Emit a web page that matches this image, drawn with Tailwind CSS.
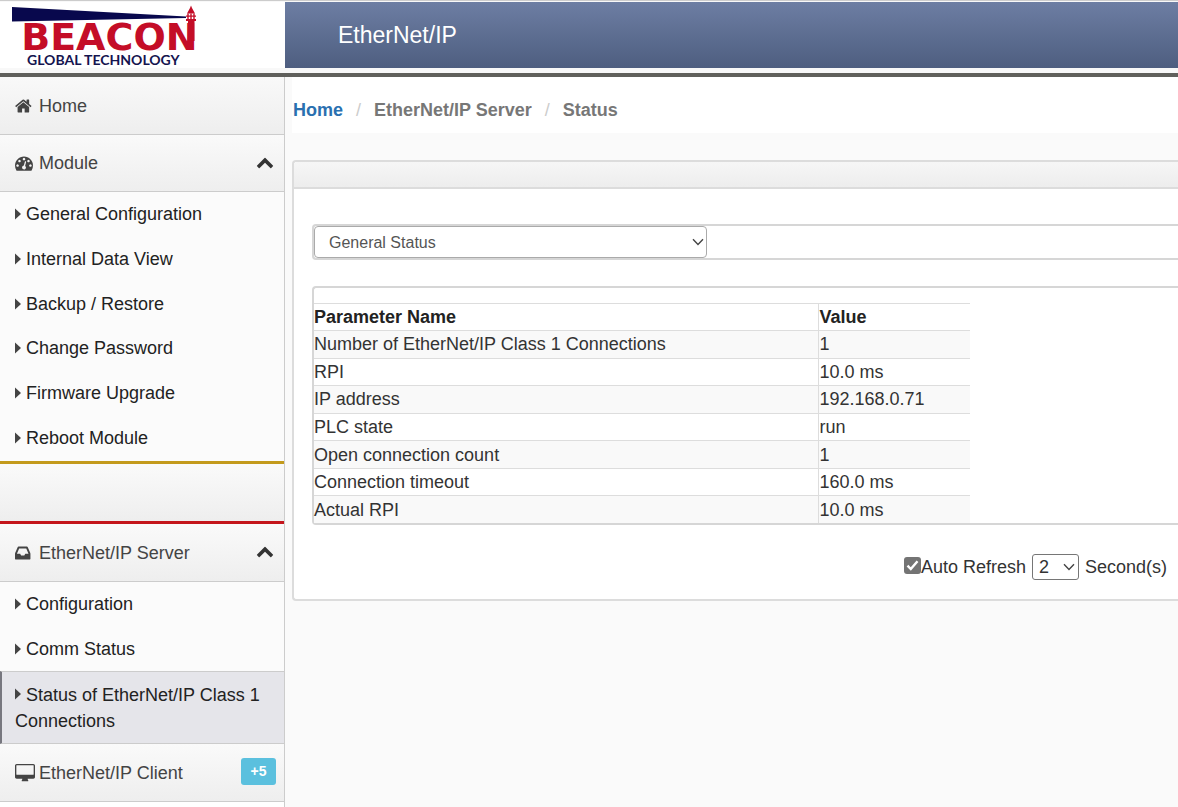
<!DOCTYPE html>
<html lang="en">
<head>
<meta charset="utf-8">
<title>EtherNet/IP Server Status</title>
<script src="https://cdn.jsdelivr.net/npm/@tailwindcss/browser@4"></script>
</head>
<body class="flex min-h-screen flex-col overflow-x-hidden bg-[#fafafa] font-['Liberation_Sans',Arial,sans-serif] text-lg text-[#333]">
<svg class="hidden" aria-hidden="true">
  <symbol id="chevron" viewBox="0 0 1792 1792"><path d="M1683 1331l-166 165q-19 19-45 19t-45-19l-531-531-531 531q-19 19-45 19t-45-19l-166-165q-19-19-19-45.500t19-45.500l742-741q19-19 45-19t45 19l742 741q19 19 19 45.500t-19 45.500z"/></symbol>
  <symbol id="caret" viewBox="0 0 6 12"><path d="M0 0.5 6 6 0 11.5z"/></symbol>
  <symbol id="down" viewBox="0 0 12 8"><path d="M1 1.2 6 6.4 11 1.2" fill="none" stroke="#444" stroke-width="1.4"/></symbol>
</svg>

<header class="flex h-[77px] shrink-0 border-t border-b-4 border-t-[#ccc] border-b-[#60605c] bg-[#f8f8f8] pt-px pb-[5px]">
  <div class="w-[285px] shrink-0 bg-white">
    <svg class="h-[66px] w-[200px]" viewBox="0 2 200 66" role="img" aria-label="Beacon Global Technology">
      <path d="M12 7 186 16.500V18L12 21.500z" fill="#08084d"/>
      <g fill="#c40d27">
        <path d="M191 5.500 192 8 195 13.500H187L190 8z"/>
        <path d="M187.300 13.500h1.400v6h-1.400zM193.300 13.500h1.400v6h-1.400zM190.300 13.500h1.400v6h-1.400zM186 19h10v2h-10zM186 15.500h10v1.200h-10z"/>
        <path d="M188 21h6.500v20h-7z"/>
        <text x="194.500" y="50" text-anchor="end" dx="3" font-family="DejaVu Sans" font-weight="bold" font-size="38">BEACON</text>
      </g>
      <text x="27" y="65" font-family="Lato, sans-serif" font-weight="bold" font-size="14" fill="#14144f">GLOBAL TECHNOLOGY</text>
    </svg>
  </div>
  <div class="flex flex-1 items-center bg-linear-to-b from-[#6d7ea3] to-[#4e5e80] pt-[2px] pl-[53px]">
    <h1 class="text-[23px] text-white">EtherNet/IP</h1>
  </div>
</header>

<div class="flex flex-1">
  <nav class="w-[285px] shrink-0 border-r border-[#ccc] bg-[#fbfbfb] text-[#222]">
    <a href="#" class="flex h-[58px] items-center border-b border-[#ccc] bg-linear-to-b from-[#f9f9f9] to-[#eee] pl-[15px] text-[#444]">
      <span class="w-6"><svg class="size-[18px]" fill="#444" viewBox="64 0 1792 1792"><path d="M1472 992v480q0 26-19 45t-45 19h-384v-384h-256v384h-384q-26 0-45-19t-19-45v-480q0-1 .5-3t.5-3l575-474 575 474q1 2 1 6zm223-69l-62 74q-8 9-21 11h-3q-13 0-21-7l-692-577-692 577q-12 8-24 7-13-2-21-11l-62-74q-8-10-7-23.500t11-21.500l719-599q32-26 76-26t76 26l244 204v-195q0-14 9-23t23-9h192q14 0 23 9t9 23v408l219 182q10 8 11 21.500t-7 23.500z"/></svg></span>Home
    </a>
    <button type="button" class="flex h-[57px] w-full items-center border-b border-[#ccc] bg-linear-to-b from-[#fafafa] to-[#eee] pr-[10px] pl-[15px] text-[#444]">
      <span class="w-6"><svg class="size-[18px]" fill="#444" viewBox="0 0 1792 1792"><path d="M384 1152q0-53-37.500-90.500t-90.500-37.500-90.500 37.500-37.500 90.500 37.500 90.500 90.500 37.500 90.500-37.500 37.500-90.500zm192-448q0-53-37.500-90.500t-90.500-37.500-90.500 37.500-37.500 90.500 37.500 90.500 90.500 37.500 90.500-37.500 37.500-90.500zm428 481l101-382q6-26-7.500-48.500t-38.500-29.500-48 6.500-30 39.500l-101 382q-60 5-107 43.500t-63 98.500q-20 77 20 146t117 89 146-20 89-117q16-60-6-117t-72-91zm660-33q0-53-37.500-90.500t-90.500-37.500-90.500 37.500-37.500 90.500 37.500 90.500 90.500 37.500 90.500-37.500 37.500-90.500zm-640-640q0-53-37.500-90.500t-90.500-37.500-90.500 37.500-37.500 90.500 37.500 90.500 90.500 37.500 90.500-37.500 37.500-90.500zm448 192q0-53-37.500-90.500t-90.500-37.500-90.500 37.500-37.500 90.500 37.500 90.500 90.500 37.500 90.500-37.500 37.500-90.500zm320 448q0 261-141 483-19 29-54 29h-1402q-35 0-54-29-141-221-141-483 0-182 71-348t191-286 286-191 348-71 348 71 286 191 191 286 71 348z"/></svg></span>Module
      <svg class="mb-[3px] ml-auto size-[18px] fill-[#333]"><use href="#chevron"/></svg>
    </button>
    <ul class="grid h-[269px] grid-rows-6 items-center pb-px pl-[15px]">
      <li><a href="#" class="flex items-center gap-[5px]"><svg class="h-3 w-1.5 fill-[#444]"><use href="#caret"/></svg>General Configuration</a></li>
      <li><a href="#" class="flex items-center gap-[5px]"><svg class="h-3 w-1.5 fill-[#444]"><use href="#caret"/></svg>Internal Data View</a></li>
      <li><a href="#" class="flex items-center gap-[5px]"><svg class="h-3 w-1.5 fill-[#444]"><use href="#caret"/></svg>Backup / Restore</a></li>
      <li><a href="#" class="flex items-center gap-[5px]"><svg class="h-3 w-1.5 fill-[#444]"><use href="#caret"/></svg>Change Password</a></li>
      <li><a href="#" class="flex items-center gap-[5px]"><svg class="h-3 w-1.5 fill-[#444]"><use href="#caret"/></svg>Firmware Upgrade</a></li>
      <li><a href="#" class="flex items-center gap-[5px]"><svg class="h-3 w-1.5 fill-[#444]"><use href="#caret"/></svg>Reboot Module</a></li>
    </ul>
    <div class="h-[63px] border-t-3 border-b-3 border-t-[#c39a1c] border-b-[#c4161c] bg-linear-to-b from-[#fafafa] to-[#eee]"></div>
    <button type="button" class="flex h-[58px] w-full items-center border-b border-[#ccc] bg-linear-to-b from-[#fafafa] to-[#eee] pr-[10px] pl-[15px] text-[#444]">
      <span class="w-6"><svg class="size-[18px]" fill="#444" viewBox="128 0 1792 1792"><path d="M1151 960h316q-1-3-2.500-8t-2.500-8l-212-496h-708l-212 496q-1 2-2.500 8t-2.500 8h316l95 192h320zm513 30v482q0 26-19 45t-45 19h-1408q-26 0-45-19t-19-45v-482q0-62 25-123l238-552q10-25 36.500-42t52.500-17h832q26 0 52.500 17t36.500 42l238 552q25 61 25 123z"/></svg></span>EtherNet/IP Server
      <svg class="mb-[3px] ml-auto size-[18px] fill-[#333]"><use href="#chevron"/></svg>
    </button>
    <ul>
      <li class="flex h-11 items-center pl-[15px]"><a href="#" class="flex items-center gap-[5px]"><svg class="h-3 w-1.5 fill-[#444]"><use href="#caret"/></svg>Configuration</a></li>
      <li class="flex h-[45px] items-center pl-[15px]"><a href="#" class="flex items-center gap-[5px]"><svg class="h-3 w-1.5 fill-[#444]"><use href="#caret"/></svg>Comm Status</a></li>
      <li class="border-y border-l-2 border-y-[#ccc] border-l-[#77777f] bg-[#e5e5ea] pt-[10px] pb-[9px] pl-[13px] leading-[26px]"><a href="#" aria-current="page"><svg class="mr-[5px] mb-1 inline h-3 w-1.5 fill-[#444] align-middle"><use href="#caret"/></svg>Status of EtherNet/IP Class 1 Connections</a></li>
    </ul>
    <a href="#" class="flex h-[58px] items-center border-b border-[#ccc] bg-linear-to-b from-[#fafafa] to-[#eee] pr-2 pl-[15px] text-[#444]">
      <span class="w-6"><svg class="h-[18px] w-5" fill="#444" viewBox="64 0 1920 1728"><path d="M1856 992v-832q0-13-9.500-22.500t-22.500-9.500h-1600q-13 0-22.500 9.500t-9.500 22.500v832q0 13 9.500 22.500t22.500 9.500h1600q13 0 22.500-9.500t9.500-22.500zm128-832v1088q0 66-47 113t-113 47h-544q0 37 16 77.500t32 71 16 43.500q0 26-19 45t-45 19h-512q-26 0-45-19t-19-45q0-14 16-44t32-70 16-78h-544q-66 0-113-47t-47-113v-1088q0-66 47-113t113-47h1600q66 0 113 47t47 113z"/></svg></span>EtherNet/IP Client
      <span class="mb-[3px] ml-auto flex h-[27px] w-[35px] items-center justify-center rounded-[3px] bg-[#5bc0de] text-sm font-bold text-white">+5</span>
    </a>
    <div class="h-[5px] bg-white"></div>
  </nav>

  <main class="min-w-0 flex-1 pl-[7px]">
    <ol class="flex h-14 items-center bg-white pt-[10px] pl-px font-bold text-[#777]">
      <li><a href="#" class="text-[#2a70b0]">Home</a></li>
      <li class="px-[13px] font-normal text-[#ccc]" aria-hidden="true">/</li>
      <li>EtherNet/IP Server</li>
      <li class="px-[13px] font-normal text-[#ccc]" aria-hidden="true">/</li>
      <li>Status</li>
    </ol>

    <section class="mt-[27px] rounded-l-[4px] border-y-2 border-l-2 border-[#dcdcdc] bg-white">
      <div class="h-[27px] rounded-tl-[3px] border-b-2 border-[#dcdcdc] bg-linear-to-b from-[#f6f6f6] to-[#ededed]"></div>
      <div class="pt-[35px] pb-[18px] pl-[18px]">
        <div class="rounded-l-[4px] border-y-2 border-l-2 border-[#d6d6d6]">
          <div class="relative w-[393px]">
            <select aria-label="Status view" class="block h-8 w-full appearance-none rounded-[4px] border border-[#aaa] bg-white pt-px pl-[14px] text-base text-[#555]"><option>General Status</option></select>
            <svg class="pointer-events-none absolute top-3 right-[3px] h-2 w-3"><use href="#down"/></svg>
          </div>
        </div>

        <div class="mt-[26px] rounded-l-[4px] border-y-2 border-l-2 border-[#d6d6d6] pt-[15px]">
          <table class="h-[220px] w-[656px] table-fixed border-collapse text-left leading-[26px]">
            <colgroup><col class="w-[504px]"><col></colgroup>
            <thead>
              <tr class="border-t border-[#ddd] text-[#222]"><th class="border-r border-[#ddd] p-0">Parameter Name</th><th class="p-0 pl-px">Value</th></tr>
            </thead>
            <tbody>
              <tr class="border-t border-[#ddd] bg-[#f9f9f9]"><td class="border-r border-[#ddd] p-0">Number of EtherNet/IP Class 1 Connections</td><td class="p-0 pl-px">1</td></tr>
              <tr class="border-t border-[#ddd]"><td class="border-r border-[#ddd] p-0">RPI</td><td class="p-0 pl-px">10.0 ms</td></tr>
              <tr class="border-t border-[#ddd] bg-[#f9f9f9]"><td class="border-r border-[#ddd] p-0">IP address</td><td class="p-0 pl-px">192.168.0.71</td></tr>
              <tr class="border-t border-[#ddd]"><td class="border-r border-[#ddd] p-0">PLC state</td><td class="p-0 pl-px">run</td></tr>
              <tr class="border-t border-[#ddd] bg-[#f9f9f9]"><td class="border-r border-[#ddd] p-0">Open connection count</td><td class="p-0 pl-px">1</td></tr>
              <tr class="border-t border-[#ddd]"><td class="border-r border-[#ddd] p-0">Connection timeout</td><td class="p-0 pl-px">160.0 ms</td></tr>
              <tr class="border-t border-[#ddd] bg-[#f9f9f9]"><td class="border-r border-[#ddd] p-0">Actual RPI</td><td class="p-0 pl-px">10.0 ms</td></tr>
            </tbody>
          </table>
        </div>

        <div class="mt-[28px] flex items-center justify-end pr-[11px]">
          <label class="flex items-center">
            <span class="relative mb-1 flex">
              <input type="checkbox" checked class="size-[17px] appearance-none rounded-[3px] bg-[#747474]">
              <svg class="pointer-events-none absolute inset-0 size-[17px]" viewBox="0 0 17 17"><path d="M3.500 8.700 6.800 12 13.500 4.200" fill="none" stroke="#fff" stroke-width="2.400"/></svg>
            </span>Auto Refresh
          </label>
          <span class="relative mx-1.5 flex">
            <select id="interval" aria-label="Refresh interval in seconds" class="h-[26px] w-[47px] appearance-none rounded-[3px] border border-[#767676] bg-white pl-[6px] leading-6"><option>2</option></select>
            <svg class="pointer-events-none absolute top-[9px] right-[4px] h-2 w-3"><use href="#down"/></svg>
          </span>
          <label for="interval">Second(s)</label>
        </div>
      </div>
    </section>
  </main>
</div>
</body>
</html>
